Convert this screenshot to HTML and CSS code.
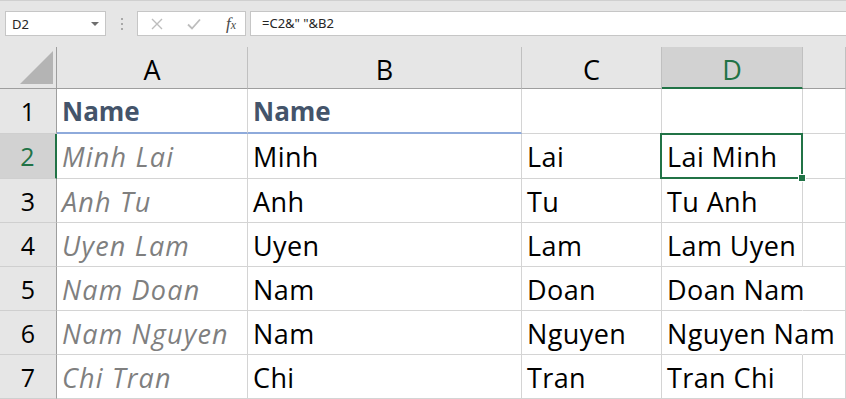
FILE: index.html
```html
<!DOCTYPE html>
<html lang="en">
<head>
    <meta charset="UTF-8">
    <title>Sheet</title>
    <link rel="stylesheet" href="styles.css">
</head>
<body>
<div class="toolbar">
    <div class="namebox">
        <span>D2</span>
        <span class="caret"></span>
    </div>
    <div class="grip"><i></i><i></i><i></i></div>
    <div class="fx-buttons">
        <svg width="12" height="12" viewBox="0 0 12 12"><path d="M1 1 L11 11 M11 1 L1 11" stroke="#bdbdbd" stroke-width="1.4" fill="none"/></svg>
        <svg width="14" height="12" viewBox="0 0 14 12"><path d="M1 6.5 L5 10.5 L13 1.5" stroke="#bdbdbd" stroke-width="1.8" fill="none"/></svg>
        <span class="fx">f<small>x</small></span>
    </div>
    <div class="formula">=C2&amp;" "&amp;B2</div>
</div>

<div class="sheet">
    <div class="corner">
        <svg width="56" height="41" viewBox="0 0 56 41"><polygon points="20,37 53,4 53,37" fill="#b4b4b4"/></svg>
    </div>
    <div class="colhead">A</div>
    <div class="colhead">B</div>
    <div class="colhead">C</div>
    <div class="colhead active">D</div>
    <div class="colhead"></div>

    <div class="rowhead">1</div>
    <div class="cell heading">Name</div>
    <div class="cell heading">Name</div>
    <div class="cell"></div>
    <div class="cell"></div>
    <div class="cell"></div>

    <div class="rowhead active">2</div>
    <div class="cell note">Minh Lai</div>
    <div class="cell">Minh</div>
    <div class="cell">Lai</div>
    <div class="cell selected">Lai Minh<div class="selection"><span class="handle"></span></div></div>
    <div class="cell"></div>

    <div class="rowhead">3</div>
    <div class="cell note">Anh Tu</div>
    <div class="cell">Anh</div>
    <div class="cell">Tu</div>
    <div class="cell">Tu Anh</div>
    <div class="cell"></div>

    <div class="rowhead">4</div>
    <div class="cell note">Uyen Lam</div>
    <div class="cell">Uyen</div>
    <div class="cell">Lam</div>
    <div class="cell">Lam Uyen</div>
    <div class="cell"></div>

    <div class="rowhead">5</div>
    <div class="cell note">Nam Doan</div>
    <div class="cell">Nam</div>
    <div class="cell">Doan</div>
    <div class="cell spill">Doan Nam</div>
    <div class="cell"></div>

    <div class="rowhead">6</div>
    <div class="cell note">Nam Nguyen</div>
    <div class="cell">Nam</div>
    <div class="cell">Nguyen</div>
    <div class="cell spill">Nguyen Nam</div>
    <div class="cell"></div>

    <div class="rowhead">7</div>
    <div class="cell note">Chi Tran</div>
    <div class="cell">Chi</div>
    <div class="cell">Tran</div>
    <div class="cell">Tran Chi</div>
    <div class="cell"></div>
</div>
</body>
</html>
```

FILE: styles.css
```css
body {
    margin: 0;
    background: #fff;
    font-family: "Open Sans", "Noto Sans", sans-serif;
    color: #000;
    overflow: hidden;
}
.toolbar {
    height: 47px;
    box-sizing: border-box;
    background: #e6e6e6;
    border-top: 1px solid #d0d0d0;
    padding: 10px 0 0 5px;
    display: flex;
    align-items: flex-start;
    font-family: "Noto Sans", sans-serif;
    font-size: 13px;
    color: #262626;
}
.namebox {
    width: 101px;
    height: 25px;
    box-sizing: border-box;
    background: #fff;
    border: 1px solid #c6c6c6;
    display: flex;
    align-items: center;
    justify-content: space-between;
    padding: 0 6px 0 6px;
}
.caret {
    width: 0;
    height: 0;
    border-left: 4px solid transparent;
    border-right: 4px solid transparent;
    border-top: 4px solid #6e6e6e;
}
.grip {
    width: 31px;
    height: 25px;
    display: flex;
    flex-direction: column;
    align-items: center;
    justify-content: center;
    gap: 3px;
}
.grip i {
    width: 2px;
    height: 2px;
    background: #a8a8a8;
}
.fx-buttons {
    width: 109px;
    height: 25px;
    box-sizing: border-box;
    background: #fff;
    border: 1px solid #c6c6c6;
    display: flex;
    align-items: center;
    justify-content: space-between;
    padding: 0 9px 0 13px;
}
.fx {
    font-family: "Liberation Serif", serif;
    font-style: italic;
    font-size: 17px;
    color: #4a4a4a;
}
.fx small {
    font-size: 12px;
}
.formula {
    flex: 1;
    margin-left: 4px;
    height: 25px;
    box-sizing: border-box;
    background: #fff;
    border: 1px solid #c6c6c6;
    border-right: none;
    padding: 0 11px;
    line-height: 23px;
}
.sheet {
    display: grid;
    grid-template-columns: 57px 191px 274px 140px 141px 1fr;
    grid-template-rows: 42px 45px 45px 44px 44px 44px 44px 44px;
}
.sheet > div {
    box-sizing: border-box;
    border-right: 1px solid #d4d4d4;
    border-bottom: 1px solid #d4d4d4;
    white-space: nowrap;
    line-height: 41px;
    padding-top: 2px;
}
.corner {
    background: #e6e6e6;
    border-right-color: #9e9e9e !important;
    border-bottom-color: #9e9e9e !important;
    padding-top: 0 !important;
}
.corner svg {
    display: block;
}
.colhead {
    background: #e6e6e6;
    border-right-color: #c0c0c0 !important;
    border-bottom-color: #9e9e9e !important;
    text-align: center;
    font-size: 27px;
}
.colhead.active {
    background: #d2d2d2;
    color: #217346;
    border-bottom: 2px solid #217346 !important;
}
.rowhead {
    background: #e6e6e6;
    border-right-color: #9e9e9e !important;
    border-bottom-color: #cfcfcf !important;
    text-align: center;
    font-size: 25px;
}
.rowhead.active {
    background: #d2d2d2;
    color: #217346;
    border-right: 2px solid #217346 !important;
}
.cell {
    font-size: 27px;
    letter-spacing: 0.4px;
    padding-left: 5px;
}
.heading {
    font-size: 26px;
    letter-spacing: 0;
    font-weight: 700;
    color: #44546a;
    border-bottom: 2px solid #8eaadb !important;
}
.note {
    font-style: italic;
    letter-spacing: 1.2px;
    color: #7f7f7f;
}
.spill {
    border-right-color: transparent !important;
}
.selected {
    position: relative;
}
.selection {
    position: absolute;
    left: -2px;
    top: -1px;
    right: -1px;
    bottom: -1px;
    border: 2px solid #217346;
}
.handle {
    position: absolute;
    right: -5px;
    bottom: -5px;
    width: 6px;
    height: 6px;
    background: #217346;
    border: 1px solid #fff;
}
```
